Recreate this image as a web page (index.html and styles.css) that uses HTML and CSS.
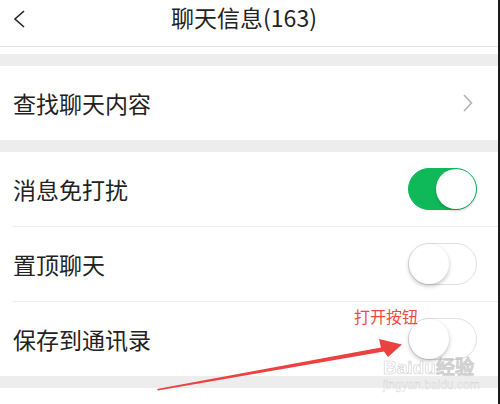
FILE: index.html
```html
<!DOCTYPE html>
<html lang="zh-CN">
<head>
    <meta charset="UTF-8">
    <meta name="viewport" content="width=device-width, initial-scale=1.0">
    <title>聊天信息</title>
    <link rel="stylesheet" href="styles.css">
</head>
<body>
<div class="page">
    <div class="header">
        <svg class="back" width="14" height="18" viewBox="0 0 14 18">
            <polyline points="12,1 3,9 12,17" fill="none" stroke="#222" stroke-width="1.6"/>
        </svg>
        <div class="title">聊天信息(163)</div>
    </div>
    <div class="strip"></div>

    <div class="gap"></div>
    <div class="group">
        <div class="row">
            <span class="label">查找聊天内容</span>
            <svg class="more" width="10" height="18" viewBox="0 0 10 18">
                <polyline points="1,1 8.5,9 1,17" fill="none" stroke="#b3b3b3" stroke-width="1.6"/>
            </svg>
        </div>
    </div>

    <div class="gap"></div>
    <div class="group">
        <div class="row">
            <span class="label">消息免打扰</span>
            <span class="switch on"><span class="knob"></span></span>
        </div>
        <div class="row">
            <span class="label">置顶聊天</span>
            <span class="switch"><span class="knob"></span></span>
        </div>
        <div class="row">
            <span class="label">保存到通讯录</span>
            <span class="switch"><span class="knob"></span></span>
        </div>
    </div>
    <div class="gap"></div>
    <div class="bottom"></div>

    <!-- annotation over the screenshot -->
    <div class="note">打开按钮</div>
    <svg class="arrow" width="500" height="404" viewBox="0 0 500 404">
        <polygon points="157,389 381,347.5 379,339 402,344.5 388,357 384,351.5 158,390.5" fill="#eb4141"/>
    </svg>
    <div class="mark">
        <div class="mark-big">Baidu经验</div>
        <div class="mark-small">jingyan.baidu.com</div>
    </div>
</div>
</body>
</html>
```

FILE: styles.css
```css
body {
    margin: 0;
    background: #1c1c1c;
    font-family: "Noto Sans CJK SC", "Noto Sans", sans-serif;
    color: #222;
}
.page {
    position: relative;
    width: 498px;
    height: 404px;
    overflow: hidden;
    background: #fff;
}
.header {
    height: 46px;
    border-bottom: 1px solid #e2e2e2;
    position: relative;
    display: flex;
    justify-content: center;
}
.back {
    position: absolute;
    left: 12px;
    top: 10px;
}
.title {
    font-size: 23px;
    line-height: 26px;
    padding-top: 4px;
    padding-right: 10px;
}
.strip {
    height: 7px;
}
.gap {
    height: 12px;
    background: #ededed;
}
.group {
    background: #fff;
}
.row {
    height: 74px;
    margin-left: 13px;
    padding-right: 21px;
    display: flex;
    align-items: center;
    justify-content: space-between;
    border-bottom: 1px solid #ececec;
}
.group .row:last-child {
    border-bottom: none;
}
.label {
    font-size: 23px;
    line-height: 30px;
}
.more {
    margin-right: 4px;
}
.switch {
    width: 67px;
    height: 40px;
    border-radius: 22px;
    border: 1.5px solid #e0e0e0;
    background: #fff;
    position: relative;
    box-sizing: content-box;
}
.switch .knob {
    position: absolute;
    top: 0;
    left: 0;
    width: 40px;
    height: 40px;
    border-radius: 50%;
    background: #fff;
    box-shadow: 0 2px 4px rgba(0, 0, 0, 0.25);
}
.switch.on {
    background: #0fb95a;
    border-color: #0fb95a;
}
.switch.on .knob {
    left: 27px;
    box-shadow: 0 2px 3px rgba(0, 0, 0, 0.2);
}
.bottom {
    height: 20px;
}
.note {
    position: absolute;
    left: 354px;
    top: 305px;
    font-size: 16px;
    line-height: 22px;
    color: #ef4848;
}
.arrow {
    position: absolute;
    left: 0;
    top: 0;
}
.mark {
    position: absolute;
    left: 383px;
    top: 358px;
    color: rgba(255, 255, 255, 0.5);
    -webkit-text-stroke: 0.7px rgba(150, 150, 150, 0.45);
    font-family: "Liberation Sans", sans-serif;
}
.mark-big {
    font-size: 19px;
    line-height: 20px;
    font-weight: bold;
}
.mark-small {
    font-size: 12px;
    line-height: 14px;
    -webkit-text-stroke: 0.4px rgba(150, 150, 150, 0.4);
}
```
